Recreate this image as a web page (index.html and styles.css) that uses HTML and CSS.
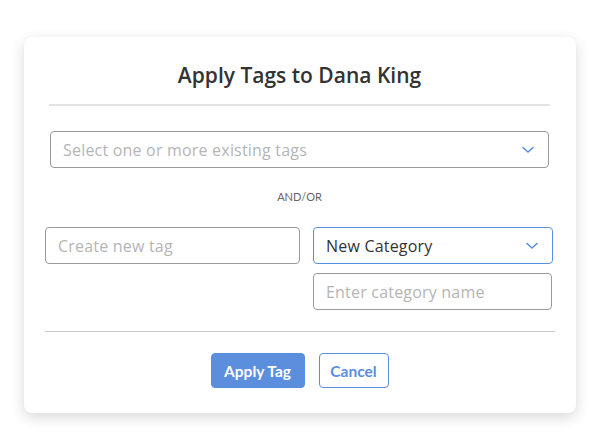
FILE: index.html
```html
<!DOCTYPE html>
<html>
<head>
<meta charset="utf-8">
<link rel="stylesheet" href="styles.css">
</head>
<body>
<div class="card">
  <div class="head">
    <h1 class="title">Apply Tags to Dana King</h1>
    <div class="rule rule-top"></div>
    <div class="field select existing">
      <span class="ph">Select one or more existing tags</span>
      <svg class="chev" width="12" height="8" viewBox="0 0 12 8"><path d="M1 1.5 L6 6 L11 1.5" fill="none" stroke="#5b8fdd" stroke-width="1.6" stroke-linecap="round" stroke-linejoin="round"/></svg>
    </div>
    <div class="andor">AND/OR</div>
  </div>
  <div class="newrow">
    <div class="field newtag"><span class="ph">Create new tag</span></div>
    <div class="catcol">
      <div class="field select active">
        <span class="val">New Category</span>
        <svg class="chev" width="12" height="8" viewBox="0 0 12 8"><path d="M1 1.5 L6 6 L11 1.5" fill="none" stroke="#5b8fdd" stroke-width="1.6" stroke-linecap="round" stroke-linejoin="round"/></svg>
      </div>
      <div class="field catname"><span class="ph">Enter category name</span></div>
    </div>
  </div>
  <div class="rule rule-bottom"></div>
  <div class="actions">
    <button class="btn primary">Apply Tag</button>
    <button class="btn secondary">Cancel</button>
  </div>
</div>
</body>
</html>
```
FILE: styles.css
```css
html, body {
  margin: 0;
  padding: 0;
  background: #ffffff;
}
body {
  font-family: "Open Sans", Lato, sans-serif;
  width: 612px;
  height: 444px;
  padding-top: 37px;
  box-sizing: border-box;
}
.card {
  margin-left: 24px;
  width: 552px;
  height: 376px;
  box-sizing: border-box;
  background: #fff;
  border-radius: 8px;
  box-shadow: 0 4px 14px rgba(0,0,0,0.16);
  padding: 0 22px 0 21px;
  display: flex;
  flex-direction: column;
}
.head {
  padding: 0 4px 0 4px;
  display: flex;
  flex-direction: column;
}
.title {
  margin: 24px 0 0 0;
  height: 28px;
  line-height: 28px;
  text-align: center;
  font-size: 21px;
  font-weight: 600;
  color: #333;
}
.rule {
  height: 2px;
  background: #e3e3e3;
}
.rule-top {
  margin-top: 15px;
}
.field {
  box-sizing: border-box;
  height: 37px;
  border: 1px solid #9a9a9a;
  border-radius: 4px;
  display: flex;
  align-items: center;
  padding: 0 12px;
  font-size: 16px;
  letter-spacing: 0.2px;
}
.ph { color: #b5b5b5; }
.val { color: #333; }
.select { justify-content: space-between; padding-right: 14px; }
.existing {
  margin-top: 25px;
  margin-left: 1px;
  margin-right: 1px;
}
.andor {
  margin-top: 22px;
  text-align: center;
  font-family: Lato, sans-serif;
  font-size: 11px;
  color: #666;
  height: 14px;
  line-height: 14px;
}
.newrow {
  margin-top: 23px;
  display: flex;
  gap: 13px;
}
.newtag { width: 255px; }
.catcol {
  display: flex;
  flex-direction: column;
  gap: 9px;
  width: 240px;
}
.active { border-color: #5b8fdd; }
.catname { width: 239px; }
.rule-bottom {
  margin-top: 21px;
  height: 1px;
  background: #c8c8c8;
  margin-right: -1px;
}
.actions {
  margin-top: 21px;
  display: flex;
  justify-content: center;
  gap: 14px;
}
.btn {
  height: 35px;
  box-sizing: border-box;
  border-radius: 4px;
  font-family: Lato, sans-serif;
  font-size: 15.5px;
  font-weight: 700;
  padding: 0;
  cursor: pointer;
}
.primary {
  width: 94px;
  background: #5b8fdd;
  border: 1px solid #5b8fdd;
  color: #fff;
}
.secondary {
  width: 70px;
  background: #fff;
  border: 1px solid #5b8fdd;
  color: #5b8fdd;
}
```
